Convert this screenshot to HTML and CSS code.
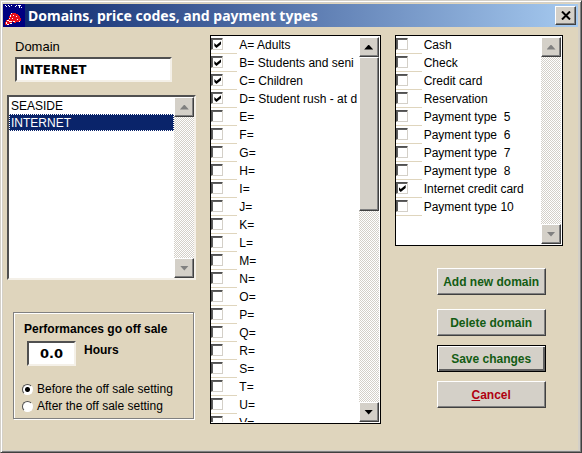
FILE: index.html
```html
<!DOCTYPE html>
<html lang="en">
<head>
    <meta charset="UTF-8">
    <meta name="viewport" content="width=device-width, initial-scale=1.0">
    <title>Domains, price codes, and payment types</title>
    <link rel="stylesheet" href="styles.css">
</head>
<body>
<div class="window">
    <header class="titlebar">
        <svg class="app-icon" viewBox="0 0 22 23" shape-rendering="crispEdges" aria-hidden="true">
            <rect width="22" height="23" fill="#000080"/>
            <path fill="#fff" d="M2 1h1v1h-1zM3 2h1v1h-1zM5 1h1v1h-1zM6 2h1v1h-1zM8 1h1v1h-1zM13 1h1v1h-1zM12 2h1v1h-1zM15 1h3v1h-3zM16 2h1v2h-1zM18 3h1v1h-1z"/>
            <path fill="#e8101c" d="M9 9h4v1h2v1h1v1h1v2h1v3h-2v1h-3v1h-2v-1h-2v1h-2v1h-2v1h-3v-3h1v-2h2v-1h1v-3h1v-2h1z"/>
            <path fill="#fff" d="M8 9h1v1h-1zM7 11h1v2h-1zM10 11h1v1h-1zM13 12h1v1h-1zM9 14h1v1h-1zM6 14h1v1h-1zM4 16h2v1h-2zM6 17h3v1h-3zM10 17h2v1h-2zM14 15h1v1h-1zM16 17h1v1h-1zM3 18h1v2h-1zM7 19h2v1h-2zM4 20h2v1h-2z"/>
        </svg>
        <h1>Domains, price codes, and payment types</h1>
        <button class="close" type="button" aria-label="Close">
            <svg viewBox="0 0 10 9" aria-hidden="true"><path d="M1 0.5L9 8.5M9 0.5L1 8.5" stroke="#000" stroke-width="2"/></svg>
        </button>
    </header>

    <form class="content">
        <div class="col">
            <label class="field-label" for="domain">Domain</label>
            <input class="text domain" id="domain" type="text" value="INTERNET">

            <div class="domain-list">
                <select size="10" aria-label="Domains">
                    <option>SEASIDE</option>
                    <option selected>INTERNET</option>
                </select>
                <div class="scrollbar disabled">
                    <button type="button" class="arrow up" aria-label="Scroll up"></button>
                    <button type="button" class="arrow down" aria-label="Scroll down"></button>
                </div>
            </div>

            <div class="group">
                <h2>Performances go off sale</h2>
                <div class="hours">
                    <input class="text" id="hours" type="text" value="0.0">
                    <label for="hours">Hours</label>
                </div>
                <label class="option"><input type="radio" name="offsale" checked>Before the off sale setting</label>
                <label class="option"><input type="radio" name="offsale">After the off sale setting</label>
            </div>
        </div>

        <div class="col">
            <div class="check-list prices">
                <div class="rows">
                    <label><input type="checkbox" checked><span>A= Adults</span></label>
                    <label><input type="checkbox" checked><span>B= Students and seni</span></label>
                    <label><input type="checkbox" checked><span>C= Children</span></label>
                    <label><input type="checkbox" checked><span>D= Student rush - at d</span></label>
                    <label><input type="checkbox"><span>E=</span></label>
                    <label><input type="checkbox"><span>F=</span></label>
                    <label><input type="checkbox"><span>G=</span></label>
                    <label><input type="checkbox"><span>H=</span></label>
                    <label><input type="checkbox"><span>I=</span></label>
                    <label><input type="checkbox"><span>J=</span></label>
                    <label><input type="checkbox"><span>K=</span></label>
                    <label><input type="checkbox"><span>L=</span></label>
                    <label><input type="checkbox"><span>M=</span></label>
                    <label><input type="checkbox"><span>N=</span></label>
                    <label><input type="checkbox"><span>O=</span></label>
                    <label><input type="checkbox"><span>P=</span></label>
                    <label><input type="checkbox"><span>Q=</span></label>
                    <label><input type="checkbox"><span>R=</span></label>
                    <label><input type="checkbox"><span>S=</span></label>
                    <label><input type="checkbox"><span>T=</span></label>
                    <label><input type="checkbox"><span>U=</span></label>
                    <label><input type="checkbox"><span>V=</span></label>
                </div>
                <div class="scrollbar">
                    <button type="button" class="arrow up" aria-label="Scroll up"></button>
                    <div class="thumb"></div>
                    <button type="button" class="arrow down" aria-label="Scroll down"></button>
                </div>
            </div>
        </div>

        <div class="col">
            <div class="check-list payments">
                <div class="rows">
                    <label><input type="checkbox"><span>Cash</span></label>
                    <label><input type="checkbox"><span>Check</span></label>
                    <label><input type="checkbox"><span>Credit card</span></label>
                    <label><input type="checkbox"><span>Reservation</span></label>
                    <label><input type="checkbox"><span>Payment type  5</span></label>
                    <label><input type="checkbox"><span>Payment type  6</span></label>
                    <label><input type="checkbox"><span>Payment type  7</span></label>
                    <label><input type="checkbox"><span>Payment type  8</span></label>
                    <label><input type="checkbox" checked><span>Internet credit card</span></label>
                    <label><input type="checkbox"><span>Payment type 10</span></label>
                </div>
                <div class="scrollbar disabled">
                    <button type="button" class="arrow up" aria-label="Scroll up"></button>
                    <button type="button" class="arrow down" aria-label="Scroll down"></button>
                </div>
            </div>

            <div class="actions">
                <button type="button" class="btn add">Add new domain</button>
                <button type="button" class="btn">Delete domain</button>
                <button type="submit" class="btn default">Save changes</button>
                <button type="button" class="btn cancel"><u>C</u>ancel</button>
            </div>
        </div>
    </form>
</div>
</body>
</html>
```
FILE: styles.css
```css
* {
    box-sizing: border-box;
}
body {
    margin: 0;
    font-family: "Liberation Sans", Arial, sans-serif;
    font-size: 12px;
    color: #000;
}
button, input, select {
    font: inherit;
    margin: 0;
    border-radius: 0;
}

/* window frame */
.window {
    min-height: 100vh;
    background: #dfd5bd;
    border: 1px solid;
    border-color: #d4d0c8 #404040 #404040 #d4d0c8;
    box-shadow: inset 1px 1px #fff, inset -1px -1px #808080, inset 2px 2px #d4d0c8, inset -3px -2px #d4d0c8;
    padding: 3px 3px 3px 2px;
}
.titlebar {
    display: flex;
    align-items: center;
    height: 23px;
    padding-right: 2px;
    background: linear-gradient(to right, #0a246a, #a6caf0);
}
.app-icon {
    width: 22px;
    height: 23px;
}
.titlebar h1 {
    flex: 1;
    margin: 0 0 0 3px;
    font-family: "Noto Sans", Tahoma, sans-serif;
    font-size: 14px;
    line-height: 23px;
    color: #fff;
    white-space: nowrap;
}
.close {
    display: flex;
    align-items: center;
    justify-content: center;
    width: 21px;
    height: 19px;
    padding: 0;
}
.close svg {
    width: 10px;
    height: 9px;
}

/* raised 3D surfaces */
.close, .arrow, .thumb, .btn {
    background: #d4d0c8;
    border: 1px solid;
    border-color: #fff #404040 #404040 #fff;
    box-shadow: inset -1px -1px #808080;
}

.content {
    display: grid;
    grid-template-columns: 189fr 170fr 168fr;
    gap: 14px;
    padding: 8px 15px 0 4px;
}
.col {
    min-width: 0;
}

/* sunken fields */
.text, .domain-list {
    background: #fff;
    border: 2px solid;
    border-color: #505050 #f4f0e8 #f4f0e8 #505050;
}
.text {
    height: 25px;
    font-family: "DejaVu Sans", Verdana, sans-serif;
    font-size: 12px;
    font-weight: bold;
}
.field-label {
    display: block;
    margin: 3px 8px 2px;
    font-size: 13px;
    line-height: 17px;
}
.domain {
    display: block;
    width: 157px;
    margin-left: 8px;
    padding: 0 3px;
}
.domain-list {
    display: flex;
    height: 185px;
    margin-top: 13px;
}
.domain-list select {
    flex: 1;
    min-width: 0;
    height: 100%;
    padding: 0;
    border: none;
    outline: none;
    background: #fff;
    overflow: hidden;
}
.domain-list option {
    min-height: 17px;
    padding: 2px 2px 1px;
    line-height: 14px;
    color: #000;
}
.domain-list option:checked {
    background: #0a246a linear-gradient(#0a246a, #0a246a);
    color: #fff;
    outline: 1px dotted #fff;
    outline-offset: -1px;
}

/* scrollbars */
.scrollbar {
    display: flex;
    flex-direction: column;
    flex: none;
    width: 20px;
    background: repeating-conic-gradient(#fff 0 25%, #d4d0c8 0 50%) 0 0 / 2px 2px;
}
.arrow {
    display: flex;
    align-items: center;
    justify-content: center;
    height: 20px;
    padding: 0;
}
.arrow::before {
    content: "";
    width: 9px;
    height: 5px;
    background: #000;
}
.up::before {
    clip-path: polygon(50% 0, 100% 100%, 0 100%);
}
.down::before {
    clip-path: polygon(0 0, 100% 0, 50% 100%);
}
.down {
    margin-top: auto;
}
.disabled .arrow::before {
    background: #808080;
}
.thumb {
    height: 154px;
}

/* off sale group */
.group {
    margin: 32px 2px 0 6px;
    padding: 8px 8px 3px;
    border: 1px solid #808080;
    box-shadow: inset 1px 1px #fff, 1px 1px #fff;
}
.group h2 {
    margin: 0 2px 4px;
    font-size: 12px;
    line-height: 16px;
}
.hours {
    display: flex;
    gap: 8px;
    margin: 0 5px 15px;
    font-weight: bold;
    line-height: 18px;
}
.hours .text {
    width: 49px;
    padding: 0;
    font-size: 13px;
    text-align: center;
}
.option {
    display: flex;
    align-items: center;
    gap: 4px;
    line-height: 17px;
    white-space: nowrap;
}
.option input {
    appearance: none;
    width: 11px;
    height: 11px;
    border: 1px solid;
    border-color: #505050 #fff #fff #505050;
    border-radius: 50%;
    background: #fff;
}
.option input:checked {
    background: radial-gradient(circle, #000 2px, #fff 3px);
}

/* checkbox lists */
.check-list {
    display: flex;
    padding: 1px 1px 1px 0;
    background: #fff;
    border: 1px solid #000;
}
.prices {
    height: 389px;
}
.payments {
    height: 211px;
}
.rows {
    flex: 1;
    min-width: 0;
    overflow: hidden;
}
.rows label {
    display: flex;
    align-items: flex-start;
    height: 18px;
    line-height: 16px;
    white-space: pre;
    background: linear-gradient(#dfd5bd, #dfd5bd) 0 16px / 26px 1px no-repeat;
}
.rows input {
    appearance: none;
    flex: none;
    width: 12px;
    height: 12px;
    margin: 1px 16px 0 0;
    border: 1px solid;
    border-color: #505050 #d4d0c8 #d4d0c8 #505050;
    box-shadow: inset 1px 1px #606060;
}
.rows input:checked::before {
    content: "";
    display: block;
    width: 7px;
    height: 7px;
    margin: 2px;
    background: #000;
    clip-path: polygon(0 28%, 30% 58%, 100% 0, 100% 42%, 30% 100%, 0 70%);
}

/* action buttons */
.actions {
    display: flex;
    flex-direction: column;
    gap: 9px;
    width: 109px;
    margin: 22px 0 0 42px;
}
.btn {
    height: 27px;
    padding: 0;
    font-weight: bold;
    color: #135c13;
    white-space: nowrap;
}
.add {
    margin-bottom: 5px;
}
.default {
    border-color: #000;
    box-shadow: inset 1px 1px #fff, inset -2px -2px #606060;
}
.cancel {
    color: #b00010;
}
```
